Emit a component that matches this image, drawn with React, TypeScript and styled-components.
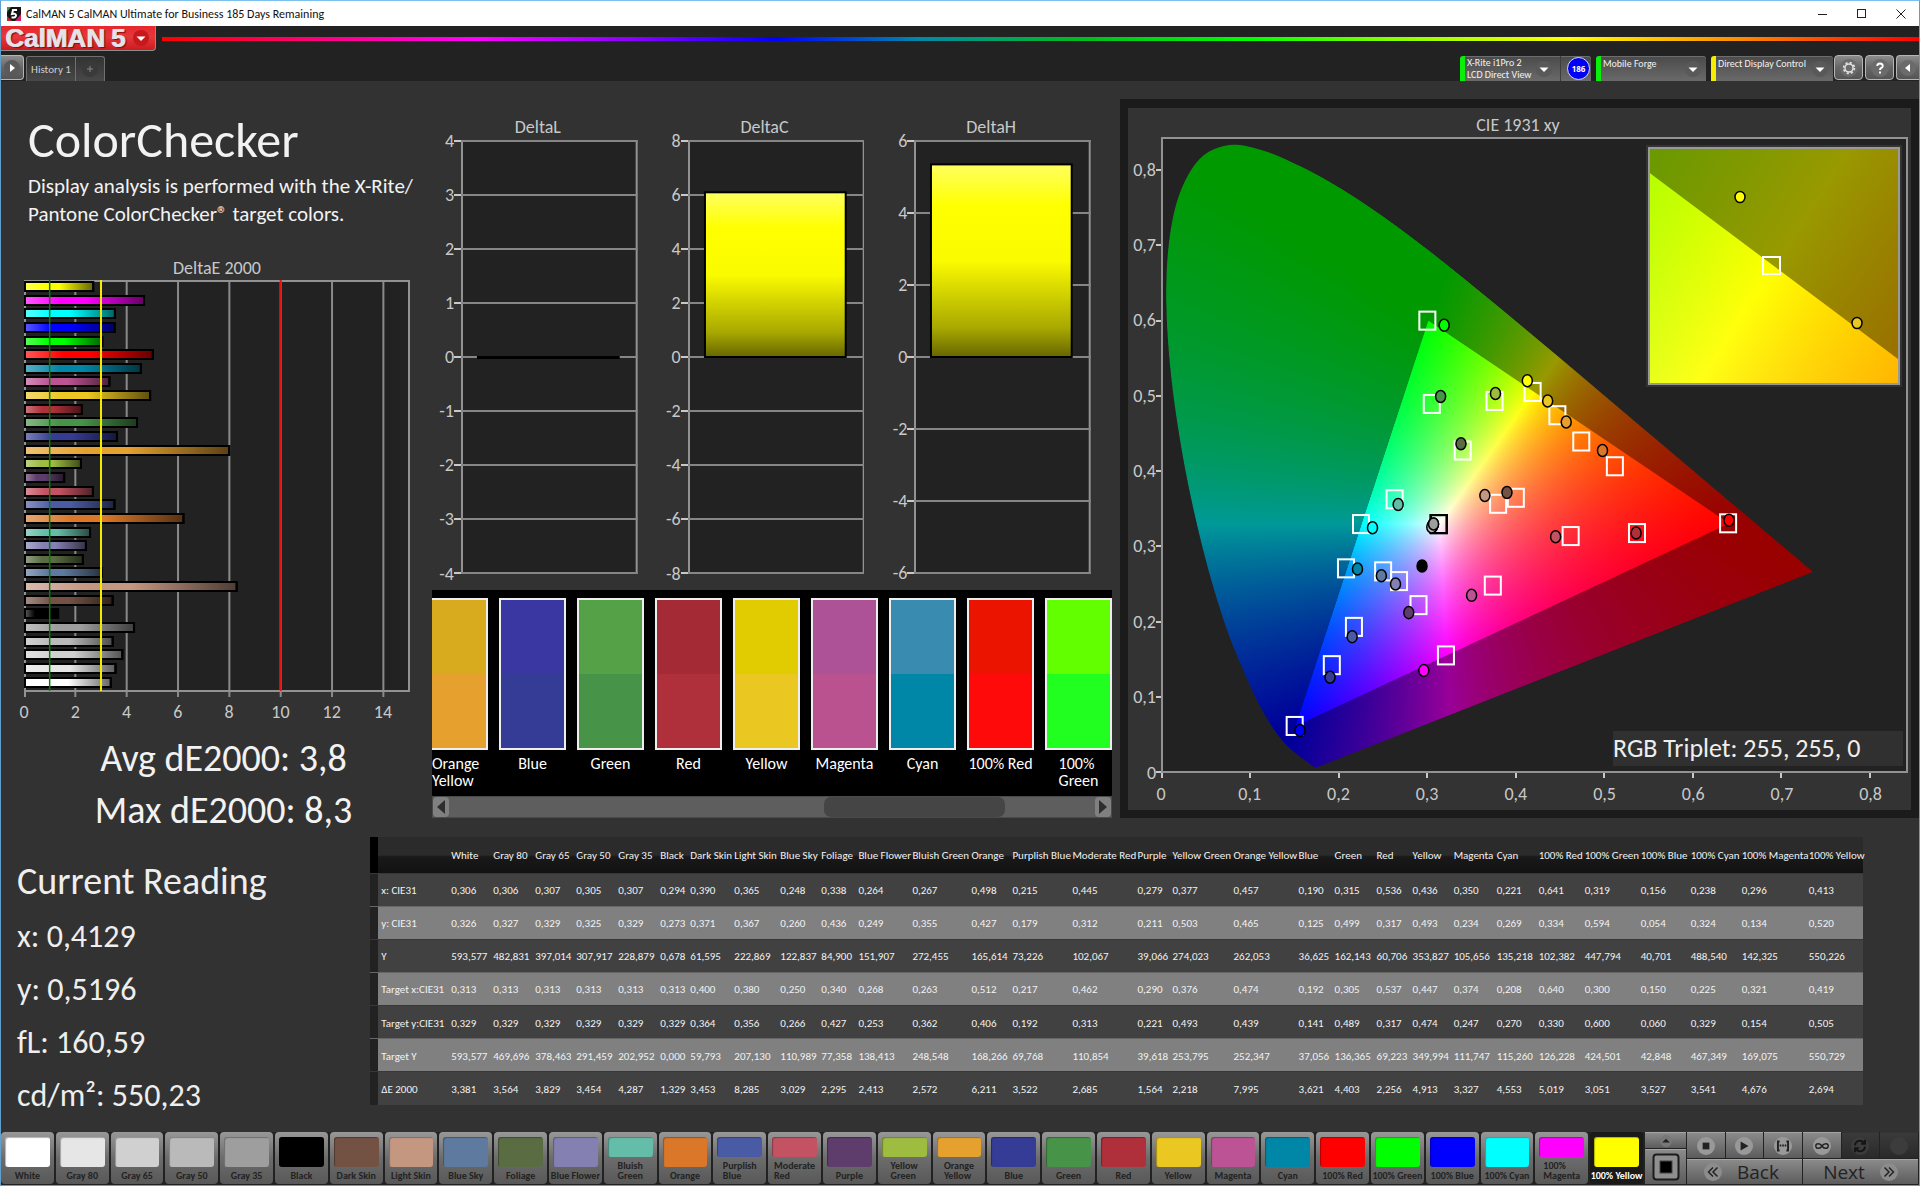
import React, { useEffect, useRef } from "react";
import styled, { createGlobalStyle, css } from "styled-components";

const uiFont = `Carlito, Lato, "Open Sans", sans-serif`;

const GlobalStyle = createGlobalStyle`
  * { box-sizing: border-box; }
  body { margin: 0; background: #323232; font-family: ${uiFont}; color: #eee; }
  button, select { font: inherit; color: inherit; border: 0; padding: 0; margin: 0; background: none; }
  h1, h2, p, dl, dd, dt { margin: 0; font-weight: 400; }
  svg, canvas { display: block; }
`;

/* ---------- measurement data ---------- */

type Patch = {
  name: string;
  color: string;
  width: number;
  x: string; y: string; Y: string;
  tx: string; ty: string; tY: string;
  de: string;
};

const source: [string, string, number, string][] = [
  ["White", "#ffffff", 42, "0,306 0,326 593,577 0,313 0,329 593,577 3,381"],
  ["Gray 80", "#e6e6e6", 42, "0,306 0,327 482,831 0,313 0,329 469,696 3,564"],
  ["Gray 65", "#d0d0d0", 41, "0,307 0,329 397,014 0,313 0,329 378,463 3,829"],
  ["Gray 50", "#bababa", 42, "0,305 0,325 307,917 0,313 0,329 291,459 3,454"],
  ["Gray 35", "#9e9e9e", 42, "0,307 0,329 228,879 0,313 0,329 202,952 4,287"],
  ["Black", "#000000", 30, "0,294 0,273 0,678 0,313 0,329 0,000 1,329"],
  ["Dark Skin", "#735244", 44, "0,390 0,371 61,595 0,400 0,364 59,793 3,453"],
  ["Light Skin", "#c49781", 46, "0,365 0,367 222,869 0,380 0,356 207,130 8,285"],
  ["Blue Sky", "#5e7a9e", 41, "0,248 0,260 122,837 0,250 0,266 110,989 3,029"],
  ["Foliage", "#5a6c42", 37, "0,338 0,436 84,900 0,340 0,427 77,358 2,295"],
  ["Blue Flower", "#8480b1", 54, "0,264 0,249 151,907 0,268 0,253 138,413 2,413"],
  ["Bluish Green", "#63bda9", 59, "0,267 0,355 272,455 0,263 0,362 248,548 2,572"],
  ["Orange", "#da7728", 41, "0,498 0,427 165,614 0,512 0,406 168,266 6,211"],
  ["Purplish Blue", "#4a5ba6", 60, "0,215 0,179 73,226 0,217 0,192 69,768 3,522"],
  ["Moderate Red", "#c35362", 65, "0,445 0,312 102,067 0,462 0,313 110,854 2,685"],
  ["Purple", "#5e3c6c", 35, "0,279 0,211 39,066 0,290 0,221 39,618 1,564"],
  ["Yellow Green", "#9dbc40", 61, "0,377 0,503 274,023 0,376 0,493 253,795 2,218"],
  ["Orange Yellow", "#e6a02e", 65, "0,457 0,465 262,053 0,474 0,439 252,347 7,995"],
  ["Blue", "#343c96", 36, "0,190 0,125 36,625 0,192 0,141 37,056 3,621"],
  ["Green", "#479449", 42, "0,315 0,499 162,143 0,305 0,489 136,365 4,403"],
  ["Red", "#af303a", 36, "0,536 0,317 60,706 0,537 0,317 69,223 2,256"],
  ["Yellow", "#ebc722", 41, "0,436 0,493 353,827 0,447 0,474 349,994 4,913"],
  ["Magenta", "#bc5395", 43, "0,350 0,234 105,656 0,374 0,247 111,747 3,327"],
  ["Cyan", "#0086a6", 42, "0,221 0,269 135,218 0,208 0,270 115,260 4,553"],
  ["100% Red", "#ff0000", 46, "0,641 0,334 102,382 0,640 0,330 126,228 5,019"],
  ["100% Green", "#00ff00", 56, "0,319 0,594 447,794 0,300 0,600 424,501 3,051"],
  ["100% Blue", "#0000ff", 50, "0,156 0,054 40,701 0,150 0,060 42,848 3,527"],
  ["100% Cyan", "#00ffff", 51, "0,238 0,324 488,540 0,225 0,329 467,349 3,541"],
  ["100% Magenta", "#ff00ff", 67, "0,296 0,134 142,325 0,321 0,154 169,075 4,676"],
  ["100% Yellow", "#ffff00", 57, "0,413 0,520 550,226 0,419 0,505 550,729 2,694"],
];

const patches: Patch[] = source.map(([name, color, width, values]) => {
  const [x, y, Y, tx, ty, tY, de] = values.split(" ");
  return { name, color, width, x, y, Y, tx, ty, tY, de };
});

const num = (s: string) => parseFloat(s.replace(",", "."));

const tableRows: [string, keyof Patch][] = [
  ["x: CIE31", "x"],
  ["y: CIE31", "y"],
  ["Y", "Y"],
  ["Target x:CIE31", "tx"],
  ["Target y:CIE31", "ty"],
  ["Target Y", "tY"],
  ["ΔE 2000", "de"],
];

/* ---------- window chrome ---------- */

const Shell = styled.div`
  display: flex;
  flex-direction: column;
  min-height: 100vh;
  border: 1px solid #5f9fcc;
  border-top-color: #7cc0ee;
  background: #323232;
  overflow: hidden;
`;

const TitleBar = styled.header`
  display: flex;
  align-items: center;
  height: 25px;
  padding: 0 13px 0 6px;
  gap: 5px;
  background: #fff;
  color: #111;
  font-size: 12px;
`;

const TitleText = styled.span`
  flex: 1;
`;

const WindowButton = styled.button`
  display: grid;
  place-items: center;
  width: 11px;
  height: 20px;
  margin-left: 23px;
`;

const Header = styled.div`
  background: #222;
`;

const BrandRow = styled.div`
  display: flex;
  gap: 6px;
  height: 26px;
`;

const Brand = styled.button`
  display: flex;
  align-items: center;
  justify-content: space-between;
  width: 155px;
  height: 25px;
  padding: 0 6px 0 4px;
  border: 1px solid #8d8d8d;
  border-top: 0;
  border-left: 0;
  border-radius: 0 0 4px 0;
  background: linear-gradient(#e5282c, #e5383c 45%, #cc1b1f);
  overflow: hidden;
`;

const BrandName = styled.span`
  display: flex;
  gap: 6px;
  color: #e4e4e8;
  font: bold 26px/22px "Liberation Sans", Arial, sans-serif;
  text-shadow: 1px 0 #d4d4d8, 2px 1px 1px #7a0c0e;
`;

const Spectrum = styled.div`
  flex: 1;
  height: 4px;
  margin-top: 11px;
  background: linear-gradient(90deg, #f00 0%, #f0f 18%, #80f 27%, #00f 35%, #08a 43%, #0b2 52%, #0f0 62%, #8f0 70%, #ff0 80%, #f80 90%, #f00 100%);
`;

const ToolRow = styled.div`
  display: flex;
  align-items: flex-end;
  height: 29px;
`;

const raised = css`
  border: 1px solid #b5b5b5;
  border-radius: 4px;
  background: linear-gradient(#8c8c8c, #666 50%, #555);
`;

const SquareButton = styled.button<{ $edge?: "left" | "right" }>`
  display: grid;
  place-items: center;
  width: ${(p) => (p.$edge ? 23 : 29)}px;
  height: 25px;
  margin: 0 2px 1px 0;
  ${raised}
  ${(p) => p.$edge === "left" && "border-left: 0; border-radius: 0 4px 4px 0;"}
  ${(p) => p.$edge === "right" && "border-right: 0; border-radius: 4px 0 0 4px; margin-right: 0;"}
`;

const Tabs = styled.div`
  display: flex;
  flex: 1;
`;

const Tab = styled.button<{ $add?: boolean }>`
  display: grid;
  place-items: center;
  width: ${(p) => (p.$add ? 29 : 50)}px;
  height: 25px;
  border: 1px solid #707070;
  border-bottom: 0;
  ${(p) => (p.$add ? "border-left: 0; border-radius: 0 3px 0 0;" : "border-radius: 3px 0 0 0;")}
  background: linear-gradient(#333, #484848);
  color: #cfcfcf;
  font-size: 11px;
`;

const Devices = styled.div`
  display: flex;
  align-items: flex-end;
  gap: 5px;
  margin-right: 1px;
`;

const Device = styled.div<{ $width: number; $accent: string }>`
  display: flex;
  width: ${(p) => p.$width}px;
  height: 25px;
  border-left: 5px solid ${(p) => p.$accent};
  border-radius: 3px 3px 0 0;
  background: linear-gradient(#4a4a4a, #6a6a6a);
  box-shadow: inset 0 1px #6d6d6d;
  color: #f2f2f2;
  font-size: 10px;
  line-height: 12px;
`;

const DeviceButton = styled.button`
  display: flex;
  flex: 1;
  align-items: center;
  justify-content: space-between;
  padding: 0 8px 0 2px;
  border-right: 1px solid #3c3c3c;
  text-align: left;
  white-space: nowrap;
`;

const DeviceField = styled.label`
  display: flex;
  flex: 1;
  align-items: center;
  padding-right: 5px;
`;

const DeviceSelect = styled.select`
  flex: 1;
  min-width: 0;
  height: 25px;
  padding: 0 0 10px 2px;
  appearance: none;
  outline: 0;
`;

const Badge = styled.button`
  align-self: center;
  width: 23px;
  height: 23px;
  margin: 0 1px 0 6px;
  border: 1px solid #ddd;
  border-radius: 50%;
  background: #0000f5;
  color: #fff;
  font: bold 8px "Open Sans", sans-serif;
`;

/* ---------- workspace ---------- */

const Workspace = styled.main`
  display: flex;
  flex: 1;
  flex-direction: column;
`;

const Upper = styled.div`
  display: grid;
  grid-template-columns: minmax(0, 431fr) minmax(0, 680fr) minmax(0, 807fr);
  height: 756px;
`;

const Summary = styled.section`
  padding: 26px 22px 0 23px;
`;

const PageTitle = styled.h1`
  padding-left: 4px;
  color: #f2f2f2;
  font-size: 50px;
  line-height: 65px;
`;

const Intro = styled.p`
  padding-left: 4px;
  color: #f2f2f2;
  font-size: 21px;
  line-height: 28px;
  white-space: nowrap;
`;

const ChartTitle = styled.h2`
  color: #c8c8c8;
  font-size: 18px;
  line-height: 24px;
  text-align: center;
`;

const DeltaEBox = styled.div`
  padding-top: 28px;
`;

const DeltaEPlot = styled.svg`
  width: 100%;
  height: 418px;
`;

const DeltaEAxis = styled.div`
  display: flex;
  justify-content: space-between;
  width: 93%;
  color: #c8c8c8;
  font-size: 18px;
  line-height: 28px;
`;

const AxisLabel = styled.span`
  display: flex;
  justify-content: center;
  align-items: center;
  width: 0;
  white-space: nowrap;
`;

const Averages = styled.div`
  padding: 6px 0 0 13px;
  color: #f2f2f2;
  font-size: 38px;
  line-height: 52px;
  text-align: center;
`;

const Middle = styled.section`
  display: flex;
  flex-direction: column;
  padding-top: 34px;
`;

const DeltaCharts = styled.div`
  display: grid;
  grid-template-columns: repeat(3, minmax(0, 1fr));
  height: 475px;
`;

const DeltaChart = styled.div`
  display: grid;
  grid-template-columns: 22px 7px minmax(0, 1fr);
  grid-template-rows: 25px 434px;
  padding-right: 21px;
  color: #c8c8c8;
`;

const DeltaTitle = styled(ChartTitle)`
  grid-column: 1 / -1;
  padding-left: 6px;
`;

const ValueAxis = styled.div<{ $top?: number }>`
  display: flex;
  flex-direction: column;
  justify-content: space-between;
  align-items: flex-end;
  padding-top: ${(p) => p.$top ?? 0}px;
  font-size: 18px;
`;

const ValueLabel = styled.span`
  display: flex;
  align-items: center;
  height: 1px;
  white-space: nowrap;
`;

const TickMarks = styled.div<{ $top?: number }>`
  display: flex;
  flex-direction: column;
  justify-content: space-between;
  padding-top: ${(p) => p.$top ?? 0}px;
`;

const Tick = styled.i`
  height: 2px;
  background: #c8c8c8;
`;

const FillSvg = styled.svg`
  width: 100%;
  height: 100%;
`;

const Swatches = styled.div`
  display: flex;
  justify-content: flex-end;
  gap: 11px;
  height: 206px;
  padding-top: 8px;
  background: #000;
  overflow: hidden;
`;

const Swatch = styled.figure<{ $cut?: boolean }>`
  flex: ${(p) => (p.$cut ? "0 0 56px" : "1 0 0")};
  display: flex;
  flex-direction: column;
  align-items: ${(p) => (p.$cut ? "flex-start" : "center")};
  margin: 0;
`;

const SwatchColors = styled.div<{ $top: string; $bottom: string; $cut?: boolean }>`
  width: 100%;
  height: 152px;
  border: 2px solid #eee;
  ${(p) => p.$cut && "border-left: 0;"}
  background: linear-gradient(${(p) => p.$top} 50%, ${(p) => p.$bottom} 50%);
`;

const SwatchName = styled.figcaption`
  padding-top: 5px;
  color: #fff;
  font-size: 16px;
  line-height: 17px;
  white-space: pre;
`;

const ScrollBar = styled.div`
  display: flex;
  justify-content: space-between;
  height: 22px;
  border: 1px solid #4a4a4a;
  background: #5e5e5e;
`;

const ScrollTrack = styled.div`
  display: flex;
  flex: 1;
`;

const ScrollThumb = styled.button`
  width: 28%;
  margin-left: 58%;
  border-radius: 7px;
  background: #454545;
`;

const ScrollButton = styled.button`
  display: grid;
  place-items: center;
  width: 16px;
  border-radius: 4px;
  background: #808080;
`;

const CiePanel = styled.section`
  height: 719px;
  margin: 18px 0 0 8px;
  padding: 9px 8px 8px;
  background: #1b1b1b;
`;

const CieInner = styled.div`
  display: grid;
  grid-template-columns: 28px 5px minmax(0, 1fr);
  grid-template-rows: 29px 636px 5px 1fr;
  height: 100%;
  padding-right: 3px;
  background: #333;
  color: #c8c8c8;
`;

const CieTitle = styled(ChartTitle)`
  grid-column: 1 / -1;
  padding-top: 5px;
`;

const CiePlot = styled.div`
  position: relative;
  border: 2px solid #929292;
  background: #222;
`;

const CieField = styled.canvas`
  width: 100%;
  height: 100%;
`;

const Markers = styled.svg`
  position: absolute;
  inset: 0;
  width: 100%;
  height: 100%;
`;

const Inset = styled.div`
  position: absolute;
  top: 6px;
  right: 4px;
  width: 256px;
  height: 242px;
  border: 2px solid #333;
  outline: 2px solid #999;
  outline-offset: -4px;
  padding: 2px;
`;

const Triplet = styled.div`
  position: absolute;
  right: 3px;
  bottom: 5px;
  width: 290px;
  height: 35px;
  background: #303030;
  color: #eee;
  font-size: 26px;
  line-height: 35px;
`;

const CieXTicks = styled.div`
  grid-column: 3;
  display: flex;
  justify-content: space-between;
  width: 95%;
`;

const XTick = styled.i`
  width: 2px;
  background: #c8c8c8;
`;

const CieXAxis = styled.div`
  grid-column: 3;
  display: flex;
  justify-content: space-between;
  width: 95%;
  font-size: 18px;
  line-height: 32px;
`;

const Lower = styled.div`
  display: grid;
  grid-template-columns: minmax(0, 369fr) minmax(0, 1492fr) minmax(0, 56fr);
`;

const Reading = styled.dl`
  padding: 16px 16px 0;
  color: #eee;
  font-size: 32px;
  line-height: 53px;
  white-space: nowrap;
`;

const ReadingTitle = styled.dt`
  font-size: 38px;
  line-height: 57px;
`;

const DataTable = styled.table`
  width: 100%;
  height: 268px;
  table-layout: fixed;
  border-collapse: collapse;
  font-size: 11px;
  color: #f2f2f2;
`;

const HeadRow = styled.tr`
  height: 36px;
  background: linear-gradient(#2b2b2b 50%, #191919 55%, #111);
`;

const HeadCell = styled.th`
  padding: 2px 0 0 3px;
  font-weight: 400;
  text-align: left;
  white-space: nowrap;
`;

const Stub = styled.td`
  padding: 0;
  background: #222;
`;

const HeadStub = styled(Stub)`
  background: #000;
`;

const DataRow = styled.tr<{ $light: boolean }>`
  height: 33px;
  background: ${(p) => (p.$light ? "#808080" : "#414141")};
  border-top: 1px solid ${(p) => (p.$light ? "#666" : "#383838")};
`;

const DataCell = styled.td`
  padding: 2px 0 0 3px;
  white-space: nowrap;
`;

/* ---------- bottom strip ---------- */

const BottomBar = styled.footer`
  display: flex;
  height: 53px;
  background: #222;
`;

const PatchStrip = styled.div`
  display: grid;
  flex: 1;
  grid-template-columns: repeat(30, minmax(0, 1fr));
  column-gap: 2px;
  padding-right: 2px;
`;

const PatchButton = styled.button<{ $active?: boolean }>`
  display: flex;
  flex-direction: column;
  align-items: center;
  justify-content: space-between;
  height: 52px;
  padding: 5px 4px 1px;
  border-radius: 4px;
  background: ${(p) => (p.$active ? "#1a1a1a" : "linear-gradient(#989898, #6c6c6c 50%, #585858)")};
  color: ${(p) => (p.$active ? "#fff" : "#222")};
  font-size: 10px;
  font-weight: 700;
  line-height: 10px;
`;

const PatchColor = styled.span<{ $color: string }>`
  flex: 1;
  width: 100%;
  border-radius: 3px;
  background: ${(p) => p.$color};
  box-shadow: inset 1px 1px 1px rgba(0, 0, 0, 0.3);
`;

const PatchName = styled.span`
  padding: 4px 0 2px;
  text-align: left;
  white-space: pre;
`;

const PatternBox = styled.div`
  display: grid;
  grid-template-rows: 16px 35px;
  row-gap: 1px;
  width: 41px;
  height: 52px;
`;

const PanelButton = styled.button<{ $off?: boolean }>`
  display: flex;
  align-items: center;
  justify-content: center;
  gap: 15px;
  border-top: 1px solid ${(p) => (p.$off ? "#333" : "#a5a5a5")};
  background: ${(p) => (p.$off ? "linear-gradient(#3a3a3a, #2a2a2a)" : "linear-gradient(#8a8a8a, #5c5c5c)")};
  color: #222;
`;

const BackButton = styled(PanelButton)`
  padding-right: 6px;
`;

const Transport = styled.div`
  display: grid;
  grid-template-rows: 26px 25px;
  row-gap: 1px;
  width: 231px;
  height: 52px;
  margin: 0 1px;
`;

const TransportRow = styled.div<{ $cols: number }>`
  display: grid;
  grid-template-columns: repeat(${(p) => p.$cols}, 1fr);
  column-gap: 1px;
`;

const NavText = styled.span`
  font: 19px/22px "Open Sans", sans-serif;
`;

/* ---------- drawings ---------- */

const Disc = ({ size = 16, shade = "#6b6b6b", children }: { size?: number; shade?: string; children?: React.ReactNode }) => (
  <svg width={size} height={size} viewBox="0 0 16 16">
    <circle cx="8" cy="8" r="8" fill={shade} />
    {children}
  </svg>
);

const DownDisc = ({ shade = "#595959" }: { shade?: string }) => (
  <Disc shade={shade}>
    <path d="M3.5 6.5h9L8 11z" fill="#fff" />
  </Disc>
);

/* ---------- chromaticity field ---------- */

const locus: [number, number][] = [
  [0.1741, 0.005], [0.1714, 0.0051], [0.1689, 0.0069], [0.1644, 0.0109], [0.1566, 0.0177], [0.144, 0.0297],
  [0.1355, 0.0399], [0.1241, 0.0578], [0.1096, 0.0868], [0.0913, 0.1327], [0.0687, 0.2007], [0.0454, 0.295],
  [0.0235, 0.4127], [0.0082, 0.5384], [0.0039, 0.6548], [0.0139, 0.7502], [0.0389, 0.812], [0.0743, 0.8338],
  [0.1142, 0.8262], [0.1547, 0.8059], [0.1929, 0.7816], [0.2296, 0.7543], [0.2658, 0.7243], [0.3016, 0.6923],
  [0.3373, 0.6589], [0.3731, 0.6245], [0.4087, 0.5896], [0.4441, 0.5547], [0.4788, 0.5202], [0.5125, 0.4866],
  [0.5448, 0.4544], [0.5752, 0.4242], [0.6029, 0.3965], [0.627, 0.3725], [0.6482, 0.3514], [0.6658, 0.334],
  [0.6915, 0.3083], [0.7079, 0.292], [0.719, 0.2809], [0.73, 0.27], [0.7347, 0.2653],
];

const gamut: [number, number][] = [[0.64, 0.33], [0.3, 0.6], [0.15, 0.06]];

/* Linear-light sRGB, clipped to the gamut and scaled to full brightness. */
const chroma = (x: number, y: number): [number, number, number] => {
  const X = x / y;
  const Z = (1 - x - y) / y;
  const r = Math.max(0, 3.2406 * X - 1.5372 - 0.4986 * Z);
  const g = Math.max(0, -0.9689 * X + 1.8758 + 0.0415 * Z);
  const b = Math.max(0, 0.0557 * X - 0.204 + 1.057 * Z);
  const scale = 255 / Math.max(r, g, b, 1e-6);
  return [r * scale, g * scale, b * scale];
};

type Range = { x0: number; y0: number; w: number; h: number };

const paintField = (canvas: HTMLCanvasElement, range: Range) => {
  const ctx = canvas.getContext("2d");
  if (!ctx) return;
  const { width, height } = canvas;
  const px = (x: number) => ((x - range.x0) / range.w) * width;
  const py = (y: number) => height - ((y - range.y0) / range.h) * height;

  const layer = document.createElement("canvas");
  layer.width = width;
  layer.height = height;
  const layerCtx = layer.getContext("2d")!;
  const image = layerCtx.createImageData(width, height);
  for (let j = 0; j < height; j++) {
    const y = range.y0 + ((height - j - 0.5) / height) * range.h;
    for (let i = 0; i < width; i++) {
      const [r, g, b] = chroma(range.x0 + ((i + 0.5) / width) * range.w, y);
      image.data.set([r, g, b, 255], (j * width + i) * 4);
    }
  }
  layerCtx.putImageData(image, 0, 0);

  /* Catmull-Rom spline through every point of the locus. */
  const outline = new Path2D();
  const last = locus.length - 1;
  outline.moveTo(px(locus[0][0]), py(locus[0][1]));
  for (let i = 0; i < last; i++) {
    const a = locus[Math.max(0, i - 1)];
    const b = locus[i];
    const c = locus[i + 1];
    const d = locus[Math.min(last, i + 2)];
    outline.bezierCurveTo(
      px(b[0] + (c[0] - a[0]) / 6), py(b[1] + (c[1] - a[1]) / 6),
      px(c[0] - (d[0] - b[0]) / 6), py(c[1] - (d[1] - b[1]) / 6),
      px(c[0]), py(c[1]),
    );
  }
  outline.closePath();

  ctx.clearRect(0, 0, width, height);
  ctx.save();
  ctx.clip(outline);
  ctx.drawImage(layer, 0, 0);
  const shade = new Path2D();
  shade.rect(0, 0, width, height);
  shade.moveTo(px(gamut[0][0]), py(gamut[0][1]));
  gamut.slice(1).forEach(([x, y]) => shade.lineTo(px(x), py(y)));
  shade.closePath();
  ctx.fillStyle = "rgba(0,0,0,0.4)";
  ctx.fill(shade, "evenodd");
  ctx.restore();
};

const fullRange: Range = { x0: 0, y0: 0, w: 0.84, h: 0.842 };
const zoomRange: Range = { x0: 0.3943, y0: 0.4803, w: 0.05, h: 0.05 };

const Field = ({ range, width, height }: { range: Range; width: number; height: number }) => {
  const ref = useRef<HTMLCanvasElement>(null);
  useEffect(() => {
    if (ref.current) paintField(ref.current, range);
  }, [range]);
  return <CieField ref={ref} width={width} height={height} aria-hidden="true" />;
};

const PlotMarkers = () => {
  const px = (s: string) => (num(s) / fullRange.w) * 742 - 1;
  const py = (s: string) => 631 - (num(s) / fullRange.h) * 631;
  return (
    <Markers viewBox="0 0 742 631" preserveAspectRatio="none">
      {patches.map((p) => (
        <rect key={p.name} x={px(p.tx) - 8} y={py(p.ty) - 9} width="16" height="18" fill="none" stroke={p.tx === "0,313" ? "#000" : "#fff"} strokeWidth="2" />
      ))}
      {patches.map((p) => (
        <ellipse key={p.name} cx={px(p.x)} cy={py(p.y)} rx="5" ry="6" fill={p.color} stroke="#000" strokeWidth="1.5" />
      ))}
    </Markers>
  );
};

/* ---------- charts ---------- */

const DeltaEChart = () => {
  const unit = 25.67;
  const at = (v: number) => v * unit;
  const step = 13.64;
  return (
    <DeltaEPlot viewBox="0 0 386 418" preserveAspectRatio="none">
      <defs>
        <linearGradient id="sheen">
          <stop offset="0" stopColor="#fff" stopOpacity="0.35" />
          <stop offset="0.3" stopColor="#fff" stopOpacity="0" />
          <stop offset="0.5" stopColor="#000" stopOpacity="0" />
          <stop offset="1" stopColor="#000" stopOpacity="0.6" />
        </linearGradient>
      </defs>
      <rect x="1" y="1" width="384" height="410" fill="#222" />
      {[2, 4, 6, 8, 10, 12, 14].map((v) => (
        <path key={v} d={`M${at(v)} 0V417`} stroke="#8a8a8a" strokeWidth="2" />
      ))}
      <path d="M1 417V1H385V411H0" fill="none" stroke="#929292" strokeWidth="2" />
      {[...patches].reverse().map((p, i) => (
        <g key={p.name} stroke="#000" strokeWidth="2">
          <rect x="1" y={Math.round(2 + i * step)} width={at(num(p.de)) - 1} height="9" fill={p.color} />
          <rect x="1" y={Math.round(2 + i * step)} width={at(num(p.de)) - 1} height="9" fill="url(#sheen)" />
        </g>
      ))}
      <path d={`M${at(1)} 0V411`} stroke="#0a7a0a" strokeWidth="1.5" />
      <path d={`M${at(3)} 0V411`} stroke="#f5ea00" strokeWidth="2" />
      <path d={`M${at(10)} 0V411`} stroke="#e81414" strokeWidth="2" />
    </DeltaEPlot>
  );
};

const DeltaBars = ({ name, max, step, value }: { name: string; max: number; step: number; value: number }) => {
  const labels: number[] = [];
  for (let v = max; v >= -max; v -= step) labels.push(v);
  const y = (v: number) => 217 - (v / max) * 216;
  return (
    <DeltaChart>
      <DeltaTitle>{name}</DeltaTitle>
      <ValueAxis>
        {labels.map((v) => <ValueLabel key={v}>{v}</ValueLabel>)}
      </ValueAxis>
      <TickMarks>
        {labels.map((v) => <Tick key={v} />)}
      </TickMarks>
      <FillSvg viewBox="0 0 177 434" preserveAspectRatio="none">
        <defs>
          <linearGradient id={`fill-${name}`} x2="0" y2="1">
            <stop offset="0" stopColor="#ffff60" />
            <stop offset="0.22" stopColor="#ffff00" />
            <stop offset="0.5" stopColor="#fbfb00" />
            <stop offset="0.85" stopColor="#a8a800" />
            <stop offset="1" stopColor="#666600" />
          </linearGradient>
        </defs>
        <rect x="1" y="1" width="175" height="432" fill="#222" stroke="#929292" strokeWidth="2" />
        {labels.map((v) => <path key={v} d={`M0 ${y(v)}H177`} stroke="#868686" strokeWidth="2" />)}
        <rect x="17" y={y(value)} width="141" height={Math.max(1, 217 - y(value))} fill={value ? `url(#fill-${name})` : "#000"} stroke="#000" strokeWidth="2" />
      </FillSvg>
    </DeltaChart>
  );
};

const swatchItems: [string, string, string][] = [
  ["Orange\nYellow", "#d8ab1f", "#e6a02e"],
  ["Blue", "#3a36a2", "#343c96"],
  ["Green", "#54a148", "#479449"],
  ["Red", "#a42b35", "#af303a"],
  ["Yellow", "#e0cc00", "#ebc722"],
  ["Magenta", "#ae5298", "#b9528f"],
  ["Cyan", "#3a8bb0", "#0086a6"],
  ["100% Red", "#ea1400", "#ff0a0a"],
  ["100%\nGreen", "#62ff00", "#20ff20"],
];

const cieY = ["0,8", "0,7", "0,6", "0,5", "0,4", "0,3", "0,2", "0,1", "0"];
const cieX = [...cieY].reverse();
const wrapped = ["Bluish Green", "Purplish Blue", "Moderate Red", "Yellow Green", "Orange Yellow", "100% Magenta"];

export default function App() {
  return (
    <Shell>
      <GlobalStyle />
      <TitleBar>
        <svg width="14" height="14" viewBox="0 0 14 14">
          <rect width="14" height="14" fill="#151515" />
          <path d="M0 9V14H5z" fill="#c62828" />
          <path d="M14 7V14H8z" fill="#d81b60" />
          <path d="M0 0H4L0 5z" fill="#2e9e4a" />
          <path d="M10 3H6L5 7Q9 6 9 8.5Q9 11 4.5 10.5" fill="none" stroke="#fff" strokeWidth="2" />
        </svg>
        <TitleText>CalMAN 5 CalMAN Ultimate for Business 185 Days Remaining</TitleText>
        <WindowButton aria-label="Minimize">
          <svg width="10" height="10"><path d="M0 5.5H9" stroke="#222" /></svg>
        </WindowButton>
        <WindowButton aria-label="Maximize">
          <svg width="10" height="10"><rect x="0.5" y="0.5" width="8" height="8" fill="none" stroke="#222" /></svg>
        </WindowButton>
        <WindowButton aria-label="Close">
          <svg width="10" height="10"><path d="M0.5 0.5L9.5 9.5M9.5 0.5L0.5 9.5" stroke="#222" /></svg>
        </WindowButton>
      </TitleBar>

      <Header>
        <BrandRow>
          <Brand>
            <BrandName><span>CalMAN</span><span>5</span></BrandName>
            <DownDisc shade="#c8181c" />
          </Brand>
          <Spectrum />
        </BrandRow>
        <ToolRow>
          <SquareButton $edge="left" aria-label="Expand">
            <Disc shade="#5a5a5a"><path d="M6 4l5 4-5 4z" fill="#fff" /></Disc>
          </SquareButton>
          <Tabs>
            <Tab>History 1</Tab>
            <Tab $add aria-label="Add tab">
              <Disc shade="#3a3a3a"><path d="M8 5v6M5 8h6" stroke="#888" /></Disc>
            </Tab>
          </Tabs>
          <Devices>
            <Device $width={131} $accent="#0aef0a">
              <DeviceButton><span>X-Rite i1Pro 2<br />LCD Direct View</span><DownDisc /></DeviceButton>
              <Badge>186</Badge>
            </Device>
            <Device $width={110} $accent="#0aef0a">
              <DeviceField>
                <DeviceSelect aria-label="Pattern source"><option>Mobile Forge</option></DeviceSelect>
                <DownDisc />
              </DeviceField>
            </Device>
            <Device $width={122} $accent="#f5ee00">
              <DeviceField>
                <DeviceSelect aria-label="Display control"><option>Direct Display Control</option></DeviceSelect>
                <DownDisc />
              </DeviceField>
            </Device>
          </Devices>
          <SquareButton aria-label="Settings">
            <Disc size={18}>
              <circle cx="8" cy="8" r="3.6" fill="none" stroke="#e2e2e2" strokeWidth="1.3" />
              <circle cx="8" cy="8" r="4.8" fill="none" stroke="#e2e2e2" strokeWidth="1.5" strokeDasharray="1.9 1.87" />
            </Disc>
          </SquareButton>
          <SquareButton aria-label="Help">
            <Disc size={18}>
              <path d="M5.5 6.2Q5.7 4 8 4T10.5 6.2Q10.4 7.4 8.9 8.1Q8 8.6 8 9.8M8 11.2V12.8" fill="none" stroke="#fff" strokeWidth="1.7" />
            </Disc>
          </SquareButton>
          <SquareButton $edge="right" aria-label="Collapse">
            <Disc><path d="M10 4L5 8l5 4z" fill="#fff" /></Disc>
          </SquareButton>
        </ToolRow>
      </Header>

      <Workspace>
        <Upper>
          <Summary>
            <PageTitle>ColorChecker</PageTitle>
            <Intro>Display analysis is performed with the X-Rite/<br />Pantone ColorChecker® target colors.</Intro>
            <DeltaEBox>
              <ChartTitle>DeltaE 2000</ChartTitle>
              <DeltaEChart />
              <DeltaEAxis>
                {[0, 2, 4, 6, 8, 10, 12, 14].map((v) => <AxisLabel key={v}>{v}</AxisLabel>)}
              </DeltaEAxis>
            </DeltaEBox>
            <Averages>
              <p>Avg dE2000: 3,8</p>
              <p>Max dE2000: 8,3</p>
            </Averages>
          </Summary>

          <Middle>
            <DeltaCharts>
              <DeltaBars name="DeltaL" max={4} step={1} value={0} />
              <DeltaBars name="DeltaC" max={8} step={2} value={6.1} />
              <DeltaBars name="DeltaH" max={6} step={2} value={5.35} />
            </DeltaCharts>
            <Swatches>
              {swatchItems.map(([name, top, bottom], i) => (
                <Swatch key={name} $cut={i === 0}>
                  <SwatchColors $top={top} $bottom={bottom} $cut={i === 0} />
                  <SwatchName>{name}</SwatchName>
                </Swatch>
              ))}
            </Swatches>
            <ScrollBar>
              <ScrollButton aria-label="Scroll left">
                <svg width="8" height="14"><path d="M8 0V14L0 7z" fill="#2e2e2e" /></svg>
              </ScrollButton>
              <ScrollTrack><ScrollThumb aria-label="Scroll position" /></ScrollTrack>
              <ScrollButton aria-label="Scroll right">
                <svg width="8" height="14"><path d="M0 0V14L8 7z" fill="#2e2e2e" /></svg>
              </ScrollButton>
            </ScrollBar>
          </Middle>

          <CiePanel>
            <CieInner>
              <CieTitle>CIE 1931 xy</CieTitle>
              <ValueAxis $top={32}>
                {cieY.map((v) => <ValueLabel key={v}>{v}</ValueLabel>)}
              </ValueAxis>
              <TickMarks $top={32}>
                {cieY.map((v) => <Tick key={v} />)}
              </TickMarks>
              <CiePlot>
                <Field range={fullRange} width={1484} height={1262} />
                <PlotMarkers />
                <Inset>
                  <Field range={zoomRange} width={248} height={234} />
                  <Markers viewBox="0 0 252 238">
                    <rect x="115" y="110" width="17" height="17" fill="none" stroke="#fff" strokeWidth="2" />
                    <ellipse cx="92" cy="50" rx="5" ry="5.5" fill="#ffff00" stroke="#000" strokeWidth="1.5" />
                    <ellipse cx="209" cy="176" rx="5" ry="5.5" fill="#ebc722" stroke="#000" strokeWidth="1.5" />
                  </Markers>
                </Inset>
                <Triplet>RGB Triplet: 255, 255, 0</Triplet>
              </CiePlot>
              <CieXTicks>
                {cieX.map((v) => <XTick key={v} />)}
              </CieXTicks>
              <CieXAxis>
                {cieX.map((v) => <AxisLabel key={v}>{v}</AxisLabel>)}
              </CieXAxis>
            </CieInner>
          </CiePanel>
        </Upper>

        <Lower>
          <Reading>
            <ReadingTitle>Current Reading</ReadingTitle>
            <dd>x: 0,4129</dd>
            <dd>y: 0,5196</dd>
            <dd>fL: 160,59</dd>
            <dd>cd/m²: 550,23</dd>
          </Reading>
          <DataTable>
            <colgroup>
              <col width={8} />
              <col width={70} />
              {patches.map((p) => <col key={p.name} width={p.width} />)}
            </colgroup>
            <thead>
              <HeadRow>
                <HeadStub />
                <HeadCell aria-label="Measure" />
                {patches.map((p) => <HeadCell key={p.name} scope="col">{p.name}</HeadCell>)}
              </HeadRow>
            </thead>
            <tbody>
              {tableRows.map(([label, key], i) => (
                <DataRow key={label} $light={i % 2 === 1}>
                  <Stub />
                  <HeadCell scope="row">{label}</HeadCell>
                  {patches.map((p) => <DataCell key={p.name}>{p[key]}</DataCell>)}
                </DataRow>
              ))}
            </tbody>
          </DataTable>
        </Lower>
      </Workspace>

      <BottomBar>
        <PatchStrip>
          {patches.map((p) => (
            <PatchButton key={p.name} $active={p.name === "100% Yellow"}>
              <PatchColor $color={p.color} />
              <PatchName>{wrapped.includes(p.name) ? p.name.replace(" ", "\n") : p.name}</PatchName>
            </PatchButton>
          ))}
        </PatchStrip>
        <PatternBox>
          <PanelButton aria-label="Show patterns">
            <Disc size={12} shade="#777"><path d="M3 10h10L8 5z" fill="#222" /></Disc>
          </PanelButton>
          <PanelButton aria-label="Pattern window">
            <svg width="28" height="28" viewBox="0 0 28 28">
              <rect x="1.5" y="1.5" width="25" height="25" rx="3" fill="#8f8f8f" stroke="#1c1c1c" strokeWidth="2" />
              <rect x="8" y="8" width="12" height="12" fill="#000" stroke="#444" />
            </svg>
          </PanelButton>
        </PatternBox>
        <Transport>
          <TransportRow $cols={6}>
            <PanelButton aria-label="Stop"><Disc size={18} shade="#999"><path d="M5 5h6v6H5z" fill="#222" /></Disc></PanelButton>
            <PanelButton aria-label="Play"><Disc size={18} shade="#999"><path d="M5 4l7 4-7 4z" fill="#222" /></Disc></PanelButton>
            <PanelButton aria-label="Read series">
              <Disc size={18} shade="#999"><path d="M5 4H3.5V12H5M11 4H12.5V12H11M5 7.5h1.5M7.3 7.5h1.5M9.5 7.5h1.5" fill="none" stroke="#222" strokeWidth="1.7" /></Disc>
            </PanelButton>
            <PanelButton aria-label="Read continuous">
              <Disc size={18} shade="#999"><path d="M8 8C6.5 5.5 2.5 5 2.5 8S6.5 10.5 8 8S13.5 5 13.5 8S9.5 10.5 8 8z" fill="none" stroke="#222" strokeWidth="1.3" /></Disc>
            </PanelButton>
            <PanelButton $off aria-label="Refresh">
              <Disc size={18} shade="#3c3c3c"><path d="M3.5 7.5A4.5 4.5 0 0 1 11.5 5M12.5 8.5A4.5 4.5 0 0 1 4.5 11M12.5 2.5V6H9M3.5 13.5V10H7" fill="none" stroke="#151515" strokeWidth="1.7" /></Disc>
            </PanelButton>
            <PanelButton $off aria-label="Record"><Disc size={18} shade="#3c3c3c" /></PanelButton>
          </TransportRow>
          <TransportRow $cols={2}>
            <BackButton>
              <Disc size={18} shade="#8c8c8c"><path d="M8 4L4 8l4 4M12 4L8 8l4 4" fill="none" stroke="#222" strokeWidth="1.3" /></Disc>
              <NavText>Back</NavText>
            </BackButton>
            <PanelButton>
              <NavText>Next</NavText>
              <Disc size={18} shade="#8c8c8c"><path d="M4 4l4 4-4 4M8 4l4 4-4 4" fill="none" stroke="#222" strokeWidth="1.3" /></Disc>
            </PanelButton>
          </TransportRow>
        </Transport>
      </BottomBar>
    </Shell>
  );
}
